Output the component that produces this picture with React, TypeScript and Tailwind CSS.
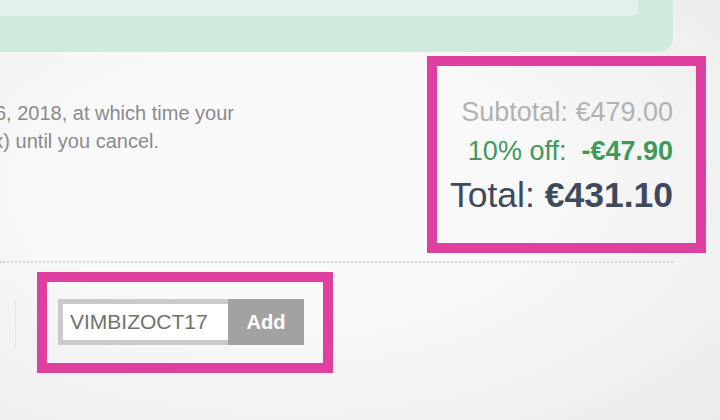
import React from 'react';

const font = { fontFamily: '"Liberation Sans", Arial, sans-serif' };

const PriceSummary: React.FC = () => (
  <div className="ml-[427px] mt-1 h-[197px] w-[279px] border-[10px] border-[#df3f9f] flex flex-col items-end pt-[28px] pr-[23px]">
    <div className="text-[27px] leading-[36px] text-[#b2b2b2]">Subtotal: €479.00</div>
    <div className="text-[27px] leading-[36px] text-[#3d9a5c] mt-[3px]">
      10% off:&nbsp; <span className="font-bold">-€47.90</span>
    </div>
    <div className="text-[35.5px] leading-[44px] text-[#3e4a5c] mt-[4px]">
      Total: <span className="font-bold">€431.10</span>
    </div>
  </div>
);

const CouponBox: React.FC = () => (
  <div className="ml-[37px] mt-[9px] h-[101px] w-[296px] border-[10px] border-[#df3f9f] pl-[11px] pt-[17px]">
    <div className="flex h-[46px]">
      <div className="w-[170px] border-[5px] border-r-0 border-[#cacaca] bg-white flex items-center pl-[7px] text-[21px] text-[#707070]">
        VIMBIZOCT17
      </div>
      <div className="w-[76px] bg-[#a2a2a2] flex items-center justify-center text-[20px] font-bold text-white">
        Add
      </div>
    </div>
  </div>
);

export default function App() {
  return (
    <div
      style={font}
      className="relative h-[420px] w-[720px] overflow-hidden bg-[radial-gradient(ellipse_at_40%_45%,#fafafa_35%,#ebebeb_100%)]"
    >
      {/* green panel from the section above */}
      <div className="h-[52px] w-[673px] rounded-br-[14px] bg-[#cfebdd]">
        <div className="h-[16px] w-[638px] rounded-br-[6px] bg-[#e0f2ea]" />
      </div>

      <div className="relative">
        {/* renewal note, cut by the left edge of the view */}
        <div className="absolute left-0 top-[43px] text-[20px] leading-[28px] text-[#8a8a8e]">
          <div className="w-[234px] overflow-hidden flex justify-end whitespace-nowrap">
            October 16, 2018, at which time your
          </div>
          <div className="w-[159px] overflow-hidden flex justify-end whitespace-nowrap">
            (excl. tax) until you cancel.
          </div>
        </div>
        <PriceSummary />
      </div>

      <div className="mt-[8px] w-[673px] border-t-2 border-dotted border-[#d6d6d6]" />

      <div className="flex">
        <div className="mt-[37px] ml-[15px] h-[48px] w-px bg-[#e6e6e6] -mr-[16px]" />
        <CouponBox />
      </div>
    </div>
  );
}
